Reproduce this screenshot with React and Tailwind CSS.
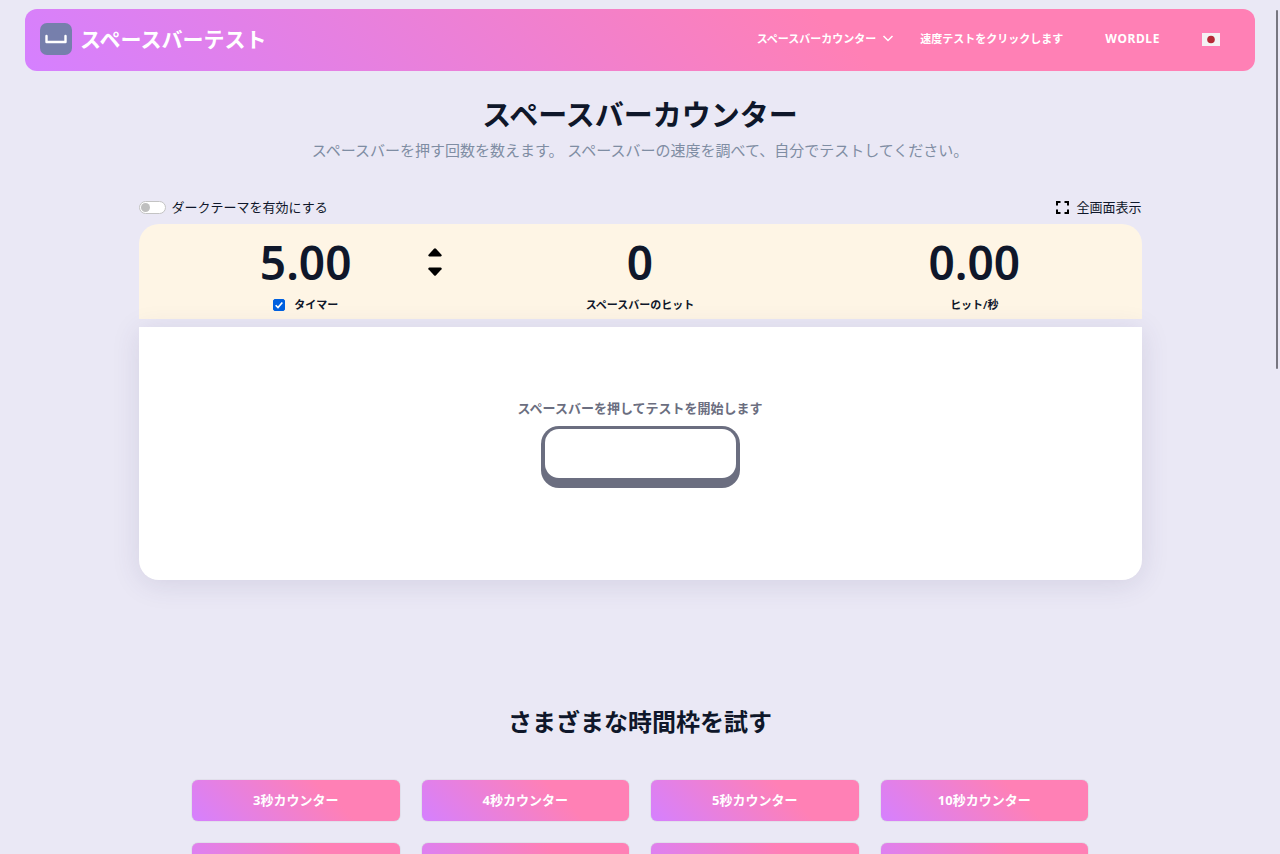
import { useState } from 'react'

const NAV_LINKS = [
  { id: 'click', label: '速度テストをクリックします', cls: '' },
  { id: 'wordle', label: 'WORDLE', cls: 'text-xs tracking-wider' },
]

const CONTADORES = [3, 4, 5, 10, 15, 20, 30, 60]

const GRADIENT = 'bg-[linear-gradient(45deg,#d580ff_0%,#ff80b5_66%)]'

function Logo() {
  return (
    <svg width="32" height="32" viewBox="0 0 32 32" aria-hidden="true">
      <rect width="32" height="32" rx="7" fill="#767fac" />
      <path d="M6.5 13v6h19v-6" fill="none" stroke="#fff" strokeWidth="2.4" strokeLinecap="round" strokeLinejoin="round" />
    </svg>
  )
}

function Header() {
  return (
    <header className={`mx-[25px] mt-[9px] flex h-[62px] items-center justify-between rounded-xl pb-0.5 pl-[15px] pr-[35px] text-white ${GRADIENT}`}>
      <a href="#" className="flex items-center gap-2">
        <Logo />
        <span className="text-[21px] font-bold leading-8">スペースバーテスト</span>
      </a>
      <nav className="flex items-center text-[11px] font-bold">
        <button className="mr-[26px] flex items-center gap-[6px]">
          スペースバーカウンター
          <svg width="12" height="12" viewBox="0 0 12 12" fill="none" stroke="currentColor" strokeWidth="1.5" aria-hidden="true">
            <path d="M1.5 3 6 7.5 10.5 3" />
          </svg>
        </button>
        {NAV_LINKS.map(link => (
          <a key={link.id} href="#" className={`mr-[42px] ${link.cls}`}>
            {link.label}
          </a>
        ))}
        <button aria-label="日本語">
          <svg width="18" height="13" viewBox="0 0 18 13" aria-hidden="true">
            <rect width="18" height="13" fill="#f4f2f4" />
            <circle cx="9" cy="6.5" r="3.8" fill="#b52a36" />
          </svg>
        </button>
      </nav>
    </header>
  )
}

function Stat({ value, children }) {
  return (
    <div className="flex flex-col items-center">
      <span className="text-[46px] font-semibold leading-12">{value}</span>
      <div className="mt-[11px] text-[11px] font-semibold leading-4">{children}</div>
    </div>
  )
}

export default function App() {
  const [dark, setDark] = useState(false)
  const [timer, setTimer] = useState(true)
  const [segundos, setSegundos] = useState(5)
  const [hits, setHits] = useState(0)

  return (
    <div className="flow-root min-h-screen bg-[#eae8f5] pb-10 font-['Noto_Sans','Noto_Sans_CJK_JP',sans-serif] text-[#0f172a]">
      <Header />

      <main>
        <h1 className="mt-6 text-center text-[29px] font-bold leading-10">スペースバーカウンター</h1>
        <p className="mt-[3px] text-center text-[15px] leading-6 text-[#7f8da3]">
          スペースバーを押す回数を数えます。 スペースバーの速度を調べて、自分でテストしてください。
        </p>

        <section className="mx-auto mt-[33px] max-w-[1003px]">
          <div className="flex h-[29px] items-center justify-between pb-1 text-[13px]">
            <label className="flex items-center gap-[6px]">
              <input type="checkbox" checked={dark} onChange={e => setDark(e.target.checked)} className="peer sr-only" />
              <span className="flex h-[13px] w-[27px] items-center rounded-full border border-[#c4c4c4] bg-white px-px peer-checked:justify-end">
                <span className="size-[9px] rounded-full bg-[#bfbfbf]" />
              </span>
              ダークテーマを有効にする
            </label>
            <button className="flex items-center gap-[7px]">
              <svg width="13" height="13" viewBox="0 0 13 13" fill="none" stroke="#000" strokeWidth="2" aria-hidden="true">
                <path d="M1 4.500V1h3.500M8.500 1H12v3.500M12 8.500V12H8.500M4.500 12H1V8.500" />
              </svg>
              全画面表示
            </button>
          </div>

          {/* Counters */}
          <div className="grid h-[95px] grid-cols-3 rounded-t-[20px] bg-[#fef5e5] pt-[14px]">
            <div className="grid grid-cols-[1fr_auto_1fr]">
              <div className="col-start-2">
                <Stat value={segundos.toFixed(2)}>
                  <label className="flex items-center gap-[9px]">
                    <input
                      type="checkbox"
                      checked={timer}
                      onChange={e => setTimer(e.target.checked)}
                      className="size-3 appearance-none rounded-[2px] border border-[#0060df] bg-white checked:bg-[#0060df] checked:bg-[url('data:image/svg+xml,%3Csvg%20xmlns=%22http://www.w3.org/2000/svg%22%20viewBox=%220%200%2012%2012%22%3E%3Cpath%20d=%22M2%206.300l2.800%202.800L10%203%22%20fill=%22none%22%20stroke=%22white%22%20stroke-width=%222%22/%3E%3C/svg%3E')]"
                    />
                    タイマー
                  </label>
                </Stat>
              </div>
              <div className="flex h-12 flex-col items-end justify-center gap-[10px] pr-[31px]">
                <button aria-label="増やす" onClick={() => setSegundos(segundos + 1)}>
                  <svg className="block" width="14" height="9" viewBox="0 0 14 9" aria-hidden="true">
                    <path d="M6 .7Q7-.3 8 .7l5.500 6q.8 1.300-.8 1.800H1.300Q-.3 8 .5 6.700Z" />
                  </svg>
                </button>
                <button aria-label="減らす" onClick={() => setSegundos(Math.max(1, segundos - 1))}>
                  <svg className="block" width="14" height="9" viewBox="0 0 14 9" aria-hidden="true">
                    <path d="M6 8.300q1 1 2 0l5.500-6Q14.300 1 12.700.5H1.300Q-.3 1 .5 2.300Z" />
                  </svg>
                </button>
              </div>
            </div>
            <Stat value={hits}>スペースバーのヒット</Stat>
            <Stat value={(hits / segundos).toFixed(2)}>ヒット/秒</Stat>
          </div>

          {/* Test area */}
          <div className="mt-2 flex h-[253px] flex-col items-center rounded-b-[20px] bg-white pt-[71px] shadow-[0_4px_28px_rgba(60,55,110,0.13)]">
            <p className="text-[13px] font-semibold leading-5 text-[#6b6e80]">スペースバーを押してテストを開始します</p>
            <button
              aria-label="スペースバー"
              onClick={() => setHits(hits + 1)}
              className="mt-2 h-[62px] w-[199px] rounded-[18px] bg-[#6b6e80] px-1 pb-[10px] pt-[3px]"
            >
              <span className="block h-full rounded-[14px] bg-white" />
            </button>
          </div>
        </section>

        <h2 className="mt-[122px] text-center text-2xl font-bold leading-10">さまざまな時間枠を試す</h2>
        <div className="mx-auto mt-[38px] grid max-w-4xl grid-cols-4 gap-[22px]">
          {CONTADORES.map(n => (
            <a
              key={n}
              href="#"
              className={`flex h-[41px] items-center justify-center rounded-md text-[13px] font-bold text-white shadow-[0_0_1px_rgba(60,60,60,0.5)] ${GRADIENT}`}
            >
              {n}秒カウンター
            </a>
          ))}
        </div>
      </main>

      {/* Scroll indicator */}
      <div className="fixed right-[2px] top-[10px] h-[42vh] w-[2px] rounded-full bg-[#777680]" />
    </div>
  )
}
